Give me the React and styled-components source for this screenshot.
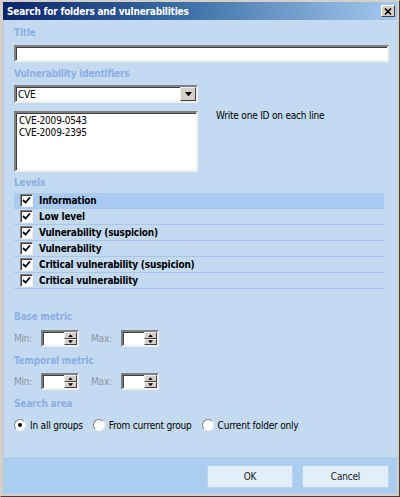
import React, { useState } from "react";
import styled, { createGlobalStyle } from "styled-components";

const GlobalStyle = createGlobalStyle`
  html, body {
    margin: 0;
    padding: 0;
    background: #ffffff;
  }
  body {
    font-family: "DejaVu Sans Condensed", "DejaVu Sans", "Liberation Sans", sans-serif;
    font-size: 10px;
    letter-spacing: -0.2px;
  }
`;

// Window frame
const Window = styled.div`
  width: 400px;
  height: 497px;
  box-sizing: border-box;
  background: #d4d0c8;
  border: 1px solid;
  border-color: #d4d0c8 #404040 #404040 #d4d0c8;
  padding: 1px 2px 2px 2px;
  display: flex;
  flex-direction: column;
`;

const TitleBar = styled.div`
  height: 18px;
  flex: none;
  display: flex;
  align-items: center;
  justify-content: space-between;
  padding: 0 2px 0 4px;
  background: linear-gradient(to right, #0a246a 0%, #3a6ea5 45%, #a6caf0 100%);
  color: #fff;
  font-weight: bold;
`;

const CloseButton = styled.div`
  width: 14px;
  height: 12px;
  box-sizing: border-box;
  background: #d4d0c8;
  border: 1px solid;
  border-color: #ffffff #404040 #404040 #ffffff;
  display: flex;
  align-items: center;
  justify-content: center;
`;

const Body = styled.div`
  flex: 1;
  background: #c4daf1;
  border-left: 1px solid #b8c8d8;
  display: flex;
  flex-direction: column;
`;

const Content = styled.div`
  flex: 1;
  display: flex;
  flex-direction: column;
  padding: 7px 8px 0 10px;
`;

const SectionLabel = styled.div`
  color: #8cafe3;
  font-weight: bold;
  line-height: 12px;
  margin-top: ${(p) => p.top || 0}px;
  margin-bottom: ${(p) => p.bottom || 4}px;
`;

const sunken = `
  box-sizing: border-box;
  background: #ffffff;
  border: 2px solid;
  border-color: #808080 #f0f0f0 #f0f0f0 #808080;
  box-shadow: inset 1px 1px 0 #404040;
`;

const TextInput = styled.div`
  ${sunken}
  height: 17px;
  width: 100%;
`;

const IdRow = styled.div`
  display: flex;
  align-items: flex-start;
  gap: 18px;
`;

const IdColumn = styled.div`
  width: 184px;
  display: flex;
  flex-direction: column;
  gap: 8px;
`;

const Select = styled.div`
  ${sunken}
  height: 18px;
  display: flex;
  align-items: center;
  justify-content: space-between;
  padding-left: 2px;
  color: #000;
`;

const SelectButton = styled.div`
  width: 16px;
  height: 14px;
  box-sizing: border-box;
  background: #d4d0c8;
  border: 1px solid;
  border-color: #f0f0f0 #404040 #404040 #f0f0f0;
  display: flex;
  align-items: center;
  justify-content: center;
`;

const TextArea = styled.div`
  ${sunken}
  height: 61px;
  padding: 2px 3px;
  line-height: 12px;
  color: #000;
`;

const Hint = styled.div`
  color: #000;
  margin-top: 25px;
  line-height: 12px;
`;

const LevelList = styled.div`
  width: 370px;
  display: flex;
  flex-direction: column;
`;

const LevelRow = styled.div`
  height: 16px;
  box-sizing: border-box;
  display: flex;
  align-items: center;
  gap: 6px;
  padding-left: 6px;
  border-bottom: 1px solid #a9c7ea;
  background: ${(p) => (p.selected ? "#a9caf1" : "transparent")};
  font-weight: bold;
  color: #000;
  cursor: pointer;
`;

const Check = styled.div`
  width: 13px;
  height: 13px;
  box-sizing: border-box;
  background: #fff;
  border: 1px solid;
  border-color: #808080 #f0f0f0 #f0f0f0 #808080;
  box-shadow: inset 1px 1px 0 #404040;
  display: flex;
  align-items: center;
  justify-content: center;
`;

const MetricRow = styled.div`
  display: flex;
  align-items: center;
  height: 17px;
  color: #8d96a3;
`;

const MetricLabel = styled.span`
  width: ${(p) => p.w}px;
`;

const Spin = styled.div`
  ${sunken}
  width: 38px;
  height: 17px;
  display: flex;
  justify-content: flex-end;
  margin-right: ${(p) => p.gap || 0}px;
`;

const SpinButtons = styled.div`
  width: 13px;
  display: flex;
  flex-direction: column;
`;

const SpinButton = styled.div`
  flex: 1;
  box-sizing: border-box;
  background: #d4d0c8;
  border: 1px solid;
  border-color: #f0f0f0 #404040 #404040 #f0f0f0;
  display: flex;
  align-items: center;
  justify-content: center;
`;

const RadioRow = styled.div`
  display: flex;
  align-items: center;
  height: 14px;
  margin-top: 4px;
  color: #000;
`;

const RadioOption = styled.label`
  display: flex;
  align-items: center;
  gap: 4px;
  margin-right: ${(p) => p.gap}px;
  cursor: pointer;
`;

const RadioCircle = styled.span`
  width: 12px;
  height: 12px;
  box-sizing: border-box;
  border-radius: 50%;
  background: #fff;
  border: 1px solid;
  border-color: #808080 #f4f4f4 #f4f4f4 #808080;
  display: flex;
  align-items: center;
  justify-content: center;
  &::after {
    content: "";
    width: 4px;
    height: 4px;
    border-radius: 50%;
    background: ${(p) => (p.on ? "#000" : "transparent")};
  }
`;

const Footer = styled.div`
  height: 37px;
  flex: none;
  background: #abcdf0;
  display: flex;
  align-items: center;
  justify-content: flex-end;
  gap: 9px;
  padding-right: 8px;
`;

const Button = styled.button`
  width: ${(p) => p.w}px;
  height: 23px;
  margin-top: 2px;
  background: #e2effb;
  border: 1px solid #bcd3ee;
  border-radius: 2px;
  font-family: inherit;
  font-size: 10px;
  letter-spacing: -0.2px;
  color: #1a1a1a;
`;

const TickMark = () => (
  <svg width="9" height="9" viewBox="0 0 9 9">
    <path d="M1 4 L3.5 6.5 L8 1.5" stroke="#000" strokeWidth="1.8" fill="none" />
  </svg>
);

const Triangle = ({ up, size = 7 }) => (
  <svg width={size} height={size / 2 + 1} viewBox="0 0 8 5">
    <path d={up ? "M0 5 L4 0 L8 5 Z" : "M0 0 L8 0 L4 5 Z"} fill="#000" />
  </svg>
);

const SpinBox = ({ gap }) => (
  <Spin gap={gap}>
    <SpinButtons>
      <SpinButton>
        <Triangle up size={5} />
      </SpinButton>
      <SpinButton>
        <Triangle size={5} />
      </SpinButton>
    </SpinButtons>
  </Spin>
);

const levels = [
  "Information",
  "Low level",
  "Vulnerability (suspicion)",
  "Vulnerability",
  "Critical vulnerability (suspicion)",
  "Critical vulnerability",
];

const areas = [
  { label: "In all groups", gap: 10 },
  { label: "From current group", gap: 10 },
  { label: "Current folder only", gap: 0 },
];

export default function App() {
  const [selected, setSelected] = useState(0);
  const [area, setArea] = useState(0);

  return (
    <Window>
      <GlobalStyle />
      <TitleBar>
        <span>Search for folders and vulnerabilities</span>
        <CloseButton>
          <svg width="8" height="7" viewBox="0 0 8 7">
            <path d="M1 0.5 L7 6.5 M7 0.5 L1 6.5" stroke="#000" strokeWidth="1.6" />
          </svg>
        </CloseButton>
      </TitleBar>
      <Body>
        <Content>
          <SectionLabel bottom={6}>Title</SectionLabel>
          <TextInput />

          <SectionLabel top={6} bottom={5}>Vulnerability identifiers</SectionLabel>
          <IdRow>
            <IdColumn>
              <Select>
                CVE
                <SelectButton>
                  <Triangle />
                </SelectButton>
              </Select>
              <TextArea>
                CVE-2009-0543
                <br />
                CVE-2009-2395
              </TextArea>
            </IdColumn>
            <Hint>Write one ID on each line</Hint>
          </IdRow>

          <SectionLabel top={5} bottom={4}>Levels</SectionLabel>
          <LevelList>
            {levels.map((level, i) => (
              <LevelRow key={level} selected={selected === i} onClick={() => setSelected(i)}>
                <Check>
                  <TickMark />
                </Check>
                {level}
              </LevelRow>
            ))}
          </LevelList>

          <SectionLabel top={22} bottom={7}>Base metric</SectionLabel>
          <MetricRow>
            <MetricLabel w={27}>Min:</MetricLabel>
            <SpinBox gap={12} />
            <MetricLabel w={30}>Max:</MetricLabel>
            <SpinBox />
          </MetricRow>

          <SectionLabel top={8} bottom={6}>Temporal metric</SectionLabel>
          <MetricRow>
            <MetricLabel w={27}>Min:</MetricLabel>
            <SpinBox gap={12} />
            <MetricLabel w={30}>Max:</MetricLabel>
            <SpinBox />
          </MetricRow>

          <SectionLabel top={8} bottom={0}>Search area</SectionLabel>
          <RadioRow>
            {areas.map((a, i) => (
              <RadioOption key={a.label} gap={a.gap} onClick={() => setArea(i)}>
                <RadioCircle on={area === i} />
                {a.label}
              </RadioOption>
            ))}
          </RadioRow>
        </Content>
        <Footer>
          <Button w={86}>OK</Button>
          <Button w={87}>Cancel</Button>
        </Footer>
      </Body>
    </Window>
  );
}
